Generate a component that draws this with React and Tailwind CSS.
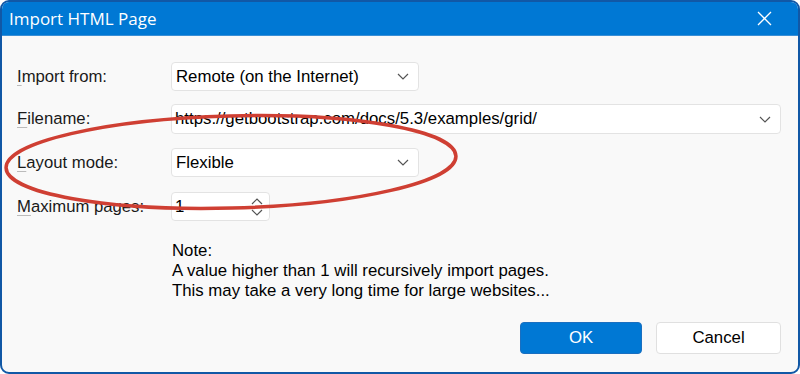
import React from 'react';

const font = { fontFamily: '"Liberation Sans", Arial, sans-serif' };

const Chevron = ({ className = '' }) => (
    <svg width="12" height="7" viewBox="0 0 12 7" className={className}>
        <path d="M1 1 L6 6 L11 1" fill="none" stroke="#555" strokeWidth="1.2" />
    </svg>
);

const Label = ({ children, k }) => (
    <div className="w-[154px] shrink-0 text-[16.7px] text-[#1a1a1a]">
        <span className="underline decoration-[#bbb] underline-offset-[3px]">{k}</span>
        {children}
    </div>
);

const Combo = ({ value, width }) => (
    <div className={`${width} h-[29px] bg-white border border-[#e3e3e3] rounded-[4px] flex items-center justify-between pl-[4px] pr-[9px]`}>
        <span className="text-[16.8px] text-black whitespace-nowrap">{value}</span>
        <Chevron />
    </div>
);

export default function App() {
    return (
        <div className="w-[800px] h-[374px] bg-white" style={font}>
            <div className="relative w-full h-full rounded-[9px] border-2 border-[#1158a6] overflow-hidden bg-[#f9f9f9] flex flex-col">
                {/* title bar */}
                <div className="h-[34px] bg-[#0078d4] border-b border-[#3a8fd6] flex items-center justify-between pl-[7px] pr-[26px] shrink-0">
                    <span className="text-[17px] text-white" style={{ fontFamily: '"Open Sans", "Noto Sans", sans-serif' }}>Import HTML Page</span>
                    <svg width="15" height="15" viewBox="0 0 15 15">
                        <path d="M1 1 L14 14 M14 1 L1 14" stroke="white" strokeWidth="1.3" />
                    </svg>
                </div>

                <div className="flex flex-col pl-[15px] pr-[17px] pt-[26px]">
                    <div className="flex items-center">
                        <Label k="I">mport from:</Label>
                        <Combo value="Remote (on the Internet)" width="w-[248px]" />
                    </div>
                    <div className="flex items-center mt-[13px]">
                        <Label k="F">ilename:</Label>
                        <div className="flex-1 h-[30px] bg-white border border-[#e3e3e3] rounded-[4px] flex items-center justify-between pl-[3px] pr-[9px]">
                            <span className="text-[16.8px] text-black">https://getbootstrap.com/docs/5.3/examples/grid/</span>
                            <Chevron />
                        </div>
                    </div>
                    <div className="flex items-center mt-[14px]">
                        <Label k="L">ayout mode:</Label>
                        <Combo value="Flexible" width="w-[248px]" />
                    </div>
                    <div className="flex items-center mt-[15px]">
                        <Label k="M">aximum pages:</Label>
                        <div className="w-[99px] h-[29px] bg-white border border-[#e3e3e3] rounded-[4px] flex items-center justify-between pl-[3px] pr-[6px]">
                            <span className="text-[16.8px] text-black">1</span>
                            <div className="flex flex-col gap-[4px]">
                                <svg width="12" height="7" viewBox="0 0 12 7">
                                    <path d="M1 6 L6 1 L11 6" fill="none" stroke="#555" strokeWidth="1.2" />
                                </svg>
                                <svg width="12" height="7" viewBox="0 0 12 7">
                                    <path d="M1 1 L6 6 L11 1" fill="none" stroke="#555" strokeWidth="1.2" />
                                </svg>
                            </div>
                        </div>
                    </div>
                    <div className="ml-[155px] mt-[20px] text-[16.8px] leading-[20px] text-black">
                        <div>Note:</div>
                        <div>A value higher than 1 will recursively import pages.</div>
                        <div>This may take a very long time for large websites...</div>
                    </div>
                    <div className="flex justify-end gap-[14px] mt-[21px]">
                        <button className="w-[122px] h-[32px] rounded-[4px] bg-[#0078d4] border border-[#1a6fc0] text-white text-[16.8px]">OK</button>
                        <button className="w-[125px] h-[32px] rounded-[4px] bg-white border border-[#e0e0e0] text-black text-[16.8px]">Cancel</button>
                    </div>
                </div>

                {/* hand-drawn highlight */}
                <svg className="absolute left-0 top-0 pointer-events-none" width="800" height="374" viewBox="0 0 800 374">
                    <ellipse cx="229" cy="160" rx="225" ry="46" transform="rotate(-1.5 229 160)" fill="none" stroke="#cf3f33" strokeWidth="3.5" />
                </svg>
            </div>
        </div>
    );
}
